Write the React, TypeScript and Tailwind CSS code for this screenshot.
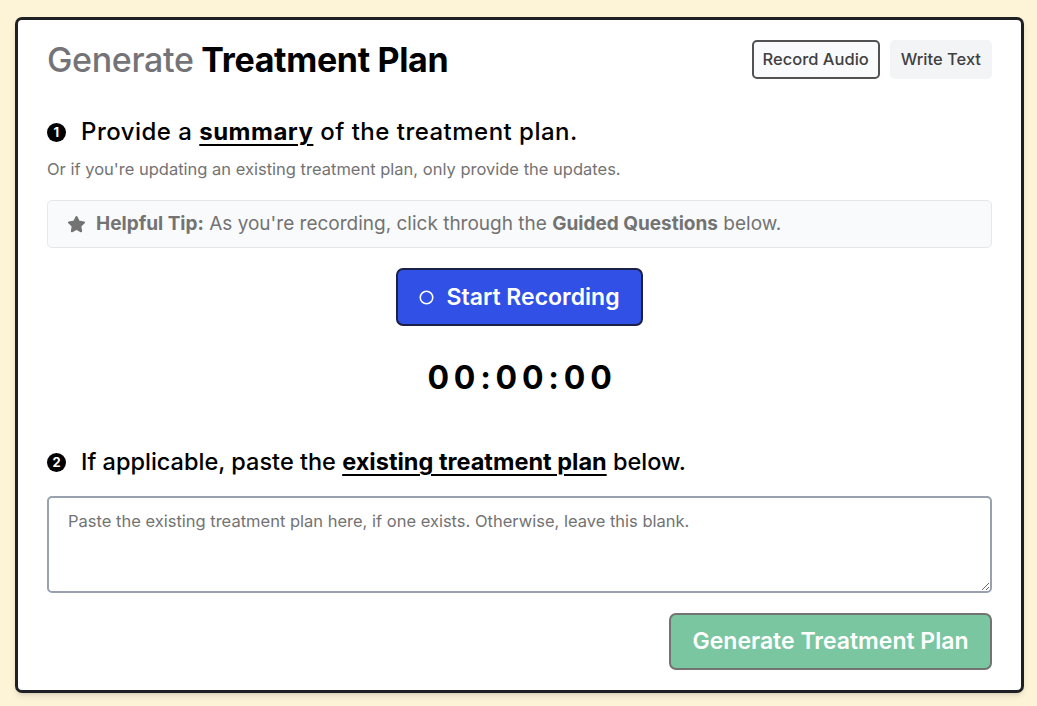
import { Circle, Star } from "lucide-react";

function StepBadge({ n }: { n: number }) {
  return (
    <span className="mr-[15px] inline-flex h-[19px] w-[19px] shrink-0 items-center justify-center rounded-full bg-black text-[13px] font-bold leading-none text-white">
      {n}
    </span>
  );
}

export default function App() {
  return (
    <div
      className="min-h-[706px] w-full bg-[#fdf4d8] pl-[15px] pr-[13px] pt-[17px] pb-[13px]"
      style={{ fontFamily: "Inter, 'Liberation Sans', sans-serif" }}
    >
      <div className="flex h-[676px] flex-col rounded-[7px] border-[3px] border-[#1f2023] bg-white px-[29px] pt-[20px] pb-[20px] shadow-md">
        <div className="flex items-center justify-between">
          <h1 className="text-[34px] leading-[39px] font-bold tracking-[-0.01em] text-black">
            <span className="font-medium text-[#737378]">Generate</span> Treatment Plan
          </h1>
          <div className="flex gap-[10px]">
            <button className="h-[39px] rounded-[5px] border-2 border-neutral-600 bg-gray-50 px-[9px] text-[16.5px] font-medium text-neutral-700">
              Record Audio
            </button>
            <button className="h-[39px] rounded-[5px] bg-gray-100 px-[11px] text-[16.5px] font-medium text-neutral-700">
              Write Text
            </button>
          </div>
        </div>

        <h2 className="mt-[38px] flex items-center text-[24px] leading-[30px] font-medium tracking-[0.02em] text-black">
          <StepBadge n={1} />
          <span>
            Provide a{" "}
            <span className="font-bold underline decoration-[1.5px] underline-offset-[4px]">summary</span> of the
            treatment plan.
          </span>
        </h2>
        <p className="mt-[11px] text-[16.5px] leading-[22px] text-neutral-500">
          Or if you're updating an existing treatment plan, only provide the updates.
        </p>

        <div className="mt-[20px] flex h-[48px] items-center rounded-[5px] border border-gray-200 bg-gray-50 px-[19px] text-[19px] text-neutral-500">
          <Star className="mr-[10px] h-[19px] w-[19px] fill-neutral-500 text-neutral-500" strokeWidth={1.5} />
          <span>
            <span className="font-bold">Helpful Tip:</span> As you're recording, click through the{" "}
            <span className="font-bold">Guided Questions</span> below.
          </span>
        </div>

        <div className="mt-[20px] flex justify-center">
          <button className="flex h-[58px] w-[247px] items-center justify-center gap-[12px] rounded-[7px] border-2 border-[#1b2144] bg-[#3050e6] text-[23px] font-semibold text-white">
            <Circle className="h-[15px] w-[15px]" strokeWidth={2.5} />
            Start Recording
          </button>
        </div>

        <div className="mt-[32px] pl-[5px] text-center text-[32px] leading-[40px] font-bold tracking-[0.15em] text-black">
          00:00:00
        </div>

        <h2 className="mt-[49px] flex items-center text-[23.5px] leading-[30px] font-medium text-black">
          <StepBadge n={2} />
          <span>
            If applicable, paste the{" "}
            <span className="font-bold underline decoration-[1.5px] underline-offset-[4px]">
              existing treatment plan
            </span>{" "}
            below.
          </span>
        </h2>

        <textarea
          className="mt-[19px] h-[97px] w-full resize-y rounded-[5px] border-2 border-gray-400 px-[19px] py-[12px] text-[16.5px] leading-[22px] text-gray-700 placeholder:text-neutral-500"
          placeholder="Paste the existing treatment plan here, if one exists. Otherwise, leave this blank."
        />

        <div className="mt-[20px] flex justify-end">
          <button className="h-[57px] w-[323px] rounded-[7px] border-2 border-neutral-500 bg-[#7ac6a1] text-[23px] font-semibold text-white">
            Generate Treatment Plan
          </button>
        </div>
      </div>
    </div>
  );
}
